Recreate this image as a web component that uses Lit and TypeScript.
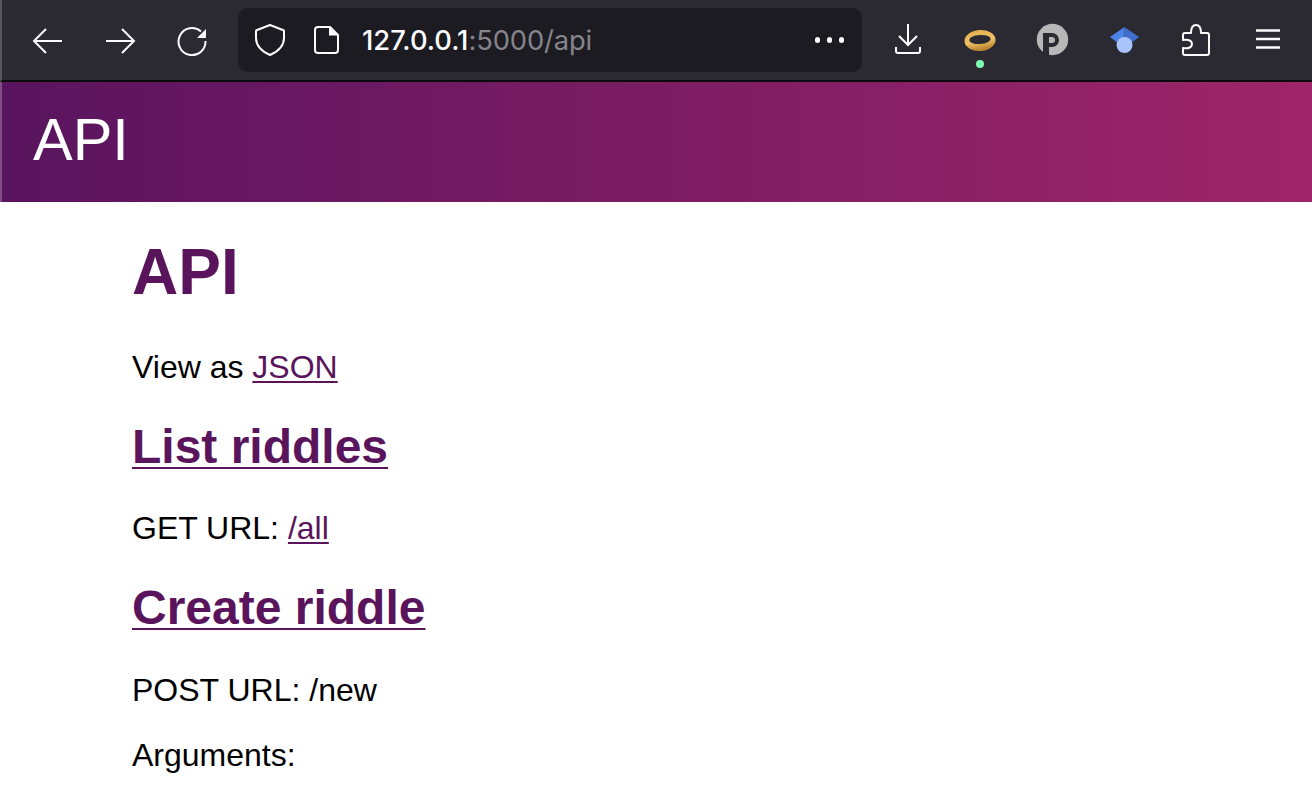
import { LitElement, html, css, svg } from "lit";
import { customElement } from "lit/decorators.js";

// toolbar icons, all on a 40x40 box
const icons = {
  back: svg`<path d="M18 9 6 21l12 12M6 21h28"/>`,
  forward: svg`<path d="M22 9l12 12-12 12M34 21H6"/>`,
  reload: svg`<path d="M29 11.500A13.500 13.500 0 1 0 33.500 21"/><path class="solid" d="M34 9v9h-9z"/>`,
  shield: svg`<path stroke-linejoin="round" d="M20 5l13.500 5.200a1 1 0 0 1 .5 1V18c0 8-6 13.500-14 17-8-3.500-14-9-14-17v-6.800a1 1 0 0 1 .5-1z"/>`,
  doc: svg`<path stroke-linejoin="round" d="M12 7h12l8 8v15a3 3 0 0 1-3 3H12a3 3 0 0 1-3-3V10a3 3 0 0 1 3-3z"/><path class="solid" d="M23 7l9 8.500h-9z"/>`,
  download: svg`<path d="M20 4v21M11 16l9 9 9-9M8 27v4a2 2 0 0 0 2 2h20a2 2 0 0 0 2-2v-4"/>`,
  ring: svg`
    <defs>
      <linearGradient id="gold" x1="0" y1="0" x2="0.2" y2="1">
        <stop offset="0" stop-color="#e2ad4a"/>
        <stop offset="0.6" stop-color="#efc265"/>
        <stop offset="1" stop-color="#b98530"/>
      </linearGradient>
    </defs>
    <ellipse class="plain" cx="20" cy="20.500" rx="15.500" ry="10.500" fill="url(#gold)" transform="rotate(-4 20 20)"/>
    <ellipse class="plain" cx="20" cy="19.500" rx="10.700" ry="4.500" fill="#2b2a33" transform="rotate(-4 20 20)"/>`,
  pcircle: svg`
    <circle class="plain" cx="20.500" cy="19.500" r="15.700" fill="#b7b7b7"/>
    <path class="plain" fill="#2b2a33" d="M11 36V13h9a7 7 0 0 1 0 14h-3v9z"/>
    <path class="plain" fill="#b7b7b7" d="M17 17h3a3 3 0 0 1 0 6h-3z"/>`,
  cap: svg`
    <path class="plain" fill="#4a82e8" d="M20.500 7 6 17l14.500 11z"/>
    <path class="plain" fill="#3f6fcb" d="M20.500 7 35 17 20.500 28z"/>
    <circle class="plain" cx="20.500" cy="25" r="8" fill="#a9c4fb"/>`,
  puzzle: svg`<path stroke-linejoin="round" d="M9 35h22a2 2 0 0 0 2-2V15a2 2 0 0 0-2-2h-6c0-4-1-8-5-8s-5 4-5 8H9a2 2 0 0 0-2 2v5c6-1 9 1 9 4s-3 5-9 4v5a2 2 0 0 0 2 2z"/>`,
  menu: svg`<path stroke-width="2.500" d="M8 10.500h24M8 19h24M8 27.500h24"/>`,
};

@customElement("tool-icon")
export class ToolIcon extends LitElement {
  static properties = { name: {} };
  name = "back";

  static styles = css`
    :host {
      display: flex;
      align-items: center;
      justify-content: center;
      flex: none;
      position: relative;
      width: 72px;
      height: 80px;
    }
    :host([slim]) {
      width: auto;
      height: auto;
    }
    svg {
      display: block;
      width: 40px;
      height: 40px;
      fill: none;
      stroke: #fbfbfe;
      stroke-width: 2;
    }
    .solid {
      fill: #fbfbfe;
      stroke: none;
    }
    .plain {
      stroke: none;
    }
  `;

  render() {
    return html`<svg viewBox="0 0 40 40">${(icons as any)[this.name]}</svg><slot></slot>`;
  }
}

@customElement("app-root")
export class AppRoot extends LitElement {
  static styles = css`
    :host {
      display: block;
      height: 802px;
      overflow: hidden;
      background: #fff;
      color: #000;
      font-family: "Liberation Sans", Arial, sans-serif;
    }
    .toolbar {
      display: flex;
      align-items: center;
      height: 80px;
      padding-left: 10px;
      border-left: 2px solid #56565c;
      border-bottom: 2px solid #0b0b0e;
      background: #2b2a33;
    }
    .urlbar {
      display: flex;
      align-items: center;
      width: 624px;
      height: 64px;
      margin: 0 10px 0 10px;
      padding-left: 12px;
      box-sizing: border-box;
      border-radius: 10px;
      background: #1c1b22;
      font-family: Inter, "Liberation Sans", sans-serif;
      font-size: 27.300px;
    }
    .address {
      margin-left: 16px;
      color: #fbfbfe;
      font-weight: 500;
    }
    .address span {
      color: #85858b;
      font-weight: 400;
      letter-spacing: -0.1px;
    }
    .dots {
      display: flex;
      gap: 6.500px;
      margin-left: auto;
      margin-right: 18px;
    }
    .dots i {
      width: 5.500px;
      height: 5.500px;
      border-radius: 50%;
      background: #fbfbfe;
    }
    .shield {
      margin-right: 16px;
    }
    .badge {
      position: absolute;
      left: 32px;
      top: 60px;
      width: 8px;
      height: 8px;
      border-radius: 50%;
      background: #7dfcb4;
    }
    .banner {
      display: flex;
      align-items: center;
      height: 115px;
      padding: 0 0 5px 31px;
      border-left: 2px solid #7d4f84;
      background: linear-gradient(90deg, #59145e, #9e2568);
      color: #fff;
      font-size: 59.500px;
    }
    main {
      padding-left: 132px;
      color: #000;
      font-size: 32px;
      line-height: 37px;
    }
    h1,
    h2,
    p {
      margin: 0;
    }
    h1,
    h2 {
      color: #5a145c;
      font-weight: 700;
    }
    h1 {
      padding-top: 33px;
      font-size: 64px;
      line-height: 74px;
    }
    h2 {
      font-size: 48px;
      line-height: 55px;
    }
    a {
      color: #5a145c;
      text-decoration: underline;
      text-decoration-thickness: 2px;
      text-underline-offset: 3px;
    }
    h2 a {
      text-underline-offset: 4px;
    }
    .view {
      margin-top: 40px;
    }
    .list {
      margin-top: 33px;
    }
    .get {
      margin-top: 36px;
    }
    .create {
      margin-top: 33px;
    }
    .post {
      margin-top: 37px;
    }
    .args {
      margin-top: 28px;
    }
  `;

  render() {
    return html`
      <div class="toolbar">
        <tool-icon name="back"></tool-icon>
        <tool-icon name="forward"></tool-icon>
        <tool-icon name="reload"></tool-icon>
        <div class="urlbar">
          <tool-icon slim class="shield" name="shield"></tool-icon>
          <tool-icon slim name="doc"></tool-icon>
          <div class="address">127.0.0.1<span>:5000/api</span></div>
          <div class="dots"><i></i><i></i><i></i></div>
        </div>
        <tool-icon name="download"></tool-icon>
        <tool-icon name="ring"><div class="badge"></div></tool-icon>
        <tool-icon name="pcircle"></tool-icon>
        <tool-icon name="cap"></tool-icon>
        <tool-icon name="puzzle"></tool-icon>
        <tool-icon name="menu"></tool-icon>
      </div>
      <div class="banner">API</div>
      <main>
        <h1>API</h1>
        <p class="view">View as <a href="#">JSON</a></p>
        <h2 class="list"><a href="#">List riddles</a></h2>
        <p class="get">GET URL: <a href="#">/all</a></p>
        <h2 class="create"><a href="#">Create riddle</a></h2>
        <p class="post">POST URL: /new</p>
        <p class="args">Arguments:</p>
      </main>
    `;
  }
}
